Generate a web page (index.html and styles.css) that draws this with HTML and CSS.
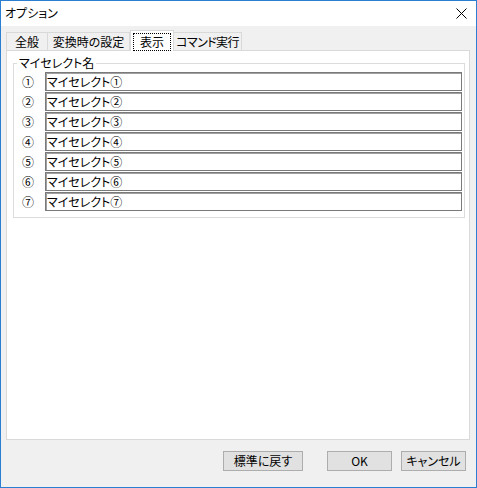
FILE: index.html
```html
<!DOCTYPE html>
<html lang="ja">
<head>
<meta charset="utf-8">
<title>オプション</title>
<link rel="stylesheet" href="styles.css">
</head>
<body>
<div class="window">
  <div class="titlebar">
    <span class="title">オプション</span>
    <svg class="close" width="11" height="11" viewBox="0 0 11 11"><path d="M0.5 0.5 L10.5 10.5 M10.5 0.5 L0.5 10.5" stroke="#000" stroke-width="1" fill="none"/></svg>
  </div>
  <div class="body">
    <div class="tabs">
      <div class="tab t1">全般</div>
      <div class="tab t2">変換時の設定</div>
      <div class="tab sel"><span class="focus">表示</span></div>
      <div class="tab t4">コマンド実行</div>
    </div>
    <div class="panel">
      <fieldset class="group">
        <legend>マイセレクト名</legend>
        <div class="rows">
          <span class="num">①</span><div class="input">マイセレクト①</div>
          <span class="num">②</span><div class="input">マイセレクト②</div>
          <span class="num">③</span><div class="input">マイセレクト③</div>
          <span class="num">④</span><div class="input">マイセレクト④</div>
          <span class="num">⑤</span><div class="input">マイセレクト⑤</div>
          <span class="num">⑥</span><div class="input">マイセレクト⑥</div>
          <span class="num">⑦</span><div class="input">マイセレクト⑦</div>
        </div>
      </fieldset>
    </div>
    <div class="footer">
      <button class="btn btn-reset">標準に戻す</button>
      <button class="btn btn-ok">OK</button>
      <button class="btn btn-cancel">キャンセル</button>
    </div>
  </div>
</div>
</body>
</html>
```

FILE: styles.css
```css
* { box-sizing: border-box; }
html, body { margin: 0; padding: 0; background: #fff; }
body {
  font-family: "Noto Sans CJK JP", "Noto Sans", sans-serif;
  font-size: 12px;
  color: #000;
  font-feature-settings: "palt";
}
.window {
  width: 477px;
  height: 488px;
  border: 1px solid #2b7fd3;
  display: flex;
  flex-direction: column;
  background: #f0f0f0;
}
.titlebar {
  height: 25px;
  background: #fff;
  display: flex;
  align-items: center;
  justify-content: space-between;
  padding: 0 9px 0 4px;
}
.title { line-height: 14px; margin-top: -1px; }
.close { display: block; }
.body {
  flex: 1;
  display: flex;
  flex-direction: column;
}
.tabs {
  height: 24px;
  display: flex;
  align-items: flex-end;
  padding-left: 5px;
}
.tab {
  height: 18px;
  border: 1px solid #d9d9d9;
  border-bottom: none;
  background: #f0f0f0;
  line-height: 16px;
  padding-top: 1px;
  text-align: center;
  white-space: nowrap;
}
.t1 { width: 42px; }
.t2 { width: 82px; border-left: none; }
.t4 { width: 68px; border-left: none; letter-spacing: -0.6px; }
.sel {
  position: relative;
  z-index: 1;
  width: 44px;
  height: 21px;
  margin-bottom: -1px;
  background: #fff;
  padding: 2px 2px 0;
}
.focus {
  display: block;
  height: 18px;
  border: 1px dotted #000;
  line-height: 15px;
}
.panel {
  flex: 1;
  margin: 0 6px 0 5px;
  background: #fff;
  border: 1px solid #d9d9d9;
  padding: 5px 4px 0 6px;
}
.group {
  margin: 0;
  border: 1px solid #dcdcdc;
  padding: 2px 2px 6px 0;
  min-width: 0;
}
.group legend {
  padding: 0 2px;
  margin-left: 3px;
  line-height: 14px;
}
.rows {
  display: grid;
  grid-template-columns: 31px 1fr;
  row-gap: 1px;
  align-items: center;
}
.num {
  text-align: center;
  padding-right: 3px;
  line-height: 19px;
  font-size: 12px;
}
.input {
  height: 19px;
  border: 1px solid #7a7a7a;
  box-shadow: inset 1px 1px 0 #a0a0a0;
  padding-left: 1px;
  line-height: 17px;
  background: #fff;
  white-space: nowrap;
}
.footer {
  height: 47px;
  display: flex;
  justify-content: flex-end;
  align-items: flex-start;
  padding: 11px 10px 0 0;
}
.btn {
  height: 20px;
  border: 1px solid #adadad;
  background: #e1e1e1;
  font-family: inherit;
  font-size: 12px;
  font-feature-settings: "palt";
  color: #000;
  padding: 0;
  line-height: 16px;
}
.btn-reset { width: 80px; margin-right: 24px; }
.btn-ok { width: 65px; margin-right: 9px; }
.btn-cancel { width: 65px; }
```
